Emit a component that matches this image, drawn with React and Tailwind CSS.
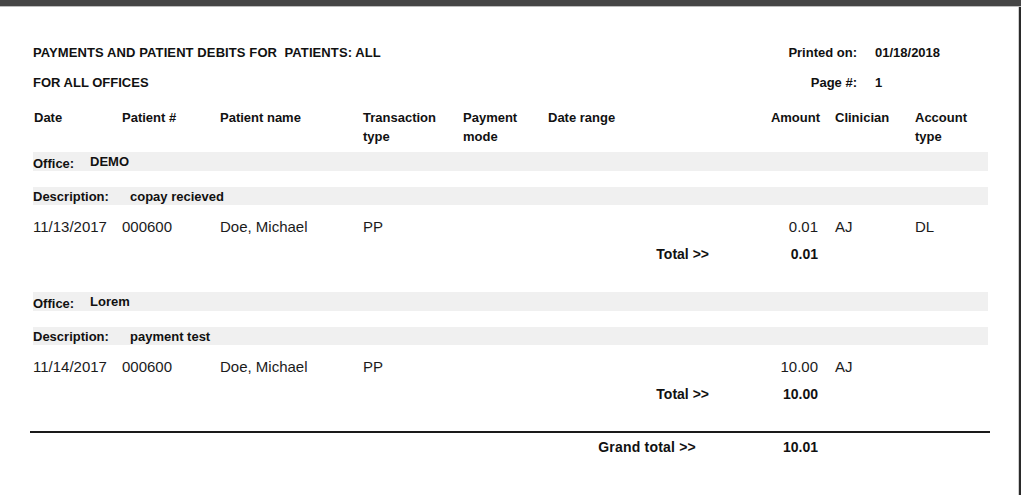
import React from "react"

const sections = [
  {
    office: "DEMO",
    description: "copay recieved",
    rows: [
      {
        date: "11/13/2017",
        patient: "000600",
        name: "Doe, Michael",
        type: "PP",
        mode: "",
        range: "",
        amount: "0.01",
        clinician: "AJ",
        account: "DL",
      },
    ],
    total: "0.01",
  },
  {
    office: "Lorem",
    description: "payment test",
    rows: [
      {
        date: "11/14/2017",
        patient: "000600",
        name: "Doe, Michael",
        type: "PP",
        mode: "",
        range: "",
        amount: "10.00",
        clinician: "AJ",
        account: "",
      },
    ],
    total: "10.00",
  },
]

const cols = "grid grid-cols-[89px_98px_143px_100px_85px_192px_95px_80px_73px]"

function HeaderRow() {
  return (
    <div className={`${cols} mt-[15px] text-[13px] font-bold leading-[19px]`}>
      <div className="pl-px">Date</div>
      <div>Patient #</div>
      <div>Patient name</div>
      <div>
        Transaction
        <br />
        type
      </div>
      <div>
        Payment
        <br />
        mode
      </div>
      <div>Date range</div>
      <div className="pr-[15px] text-right">Amount</div>
      <div>Clinician</div>
      <div>
        Account
        <br />
        type
      </div>
    </div>
  )
}

function Section({ section, first }) {
  return (
    <div className={first ? "mt-[6px]" : "mt-[28px]"}>
      {/* office band */}
      <div className="flex h-[19px] items-start bg-[#f0f0f0] text-[13px] font-bold leading-[17px]">
        <span className="w-[57px] pt-[3px]">Office:</span>
        <span className="pt-px">{section.office}</span>
      </div>

      {/* description band */}
      <div className="mt-[16px] flex h-[18px] items-start bg-[#f0f0f0] pt-px text-[13px] font-bold leading-[17px]">
        <span className="w-[97px]">Description:</span>
        <span>{section.description}</span>
      </div>

      {section.rows.map((row, i) => (
        <div
          key={i}
          className={`${cols} mt-[12px] text-[15px] leading-5 text-[#1b1b1b]`}
        >
          <div>{row.date}</div>
          <div>{row.patient}</div>
          <div>{row.name}</div>
          <div>{row.type}</div>
          <div>{row.mode}</div>
          <div>{row.range}</div>
          <div className="pr-[17px] text-right">{row.amount}</div>
          <div>{row.clinician}</div>
          <div>{row.account}</div>
        </div>
      ))}

      {/* total */}
      <div className="mt-[7px] grid grid-cols-[676px_109px] text-[14px] font-bold leading-5">
        <div className="text-right">Total &gt;&gt;</div>
        <div className="text-right">{section.total}</div>
      </div>
    </div>
  )
}

export default function App() {
  return (
    <div className="flex min-h-screen flex-col bg-white font-['Liberation_Sans',Arial,sans-serif] text-[#111]">
      <div className="h-[7px] border-b border-[#bdbdbd] bg-[#464646]" />
      <div className="flex flex-1">
        <div className="flex-1 pl-[33px]">
          <div className="w-[955px]">
            {/* report title */}
            <div className="mt-[36px] flex justify-between text-[13px] font-bold leading-5">
              <div className="whitespace-pre tracking-[0.1px]">
                PAYMENTS AND PATIENT DEBITS FOR  PATIENTS: ALL
              </div>
              <div className="grid grid-cols-[87px_113px] gap-x-[18px]">
                <div className="text-right">Printed on:</div>
                <div>01/18/2018</div>
              </div>
            </div>
            <div className="mt-[10px] flex justify-between text-[13px] font-bold leading-5">
              <div>FOR ALL OFFICES</div>
              <div className="grid grid-cols-[87px_113px] gap-x-[18px]">
                <div className="text-right">Page #:</div>
                <div>1</div>
              </div>
            </div>

            <HeaderRow />

            {sections.map((s, i) => (
              <Section key={s.office} section={s} first={i === 0} />
            ))}

            {/* grand total */}
            <div className="-ml-[3px] mt-[27px] h-[2px] w-[960px] bg-[#1a1a1a]" />
            <div className="mt-[4px] grid grid-cols-[663px_122px] text-[14px] font-bold leading-5">
              <div className="text-right tracking-[0.2px]">Grand total &gt;&gt;</div>
              <div className="text-right">10.01</div>
            </div>
          </div>
        </div>
        <div className="w-[3px] border-l border-[#cfcfcf] bg-[#2a2a2a]" />
      </div>
    </div>
  )
}
